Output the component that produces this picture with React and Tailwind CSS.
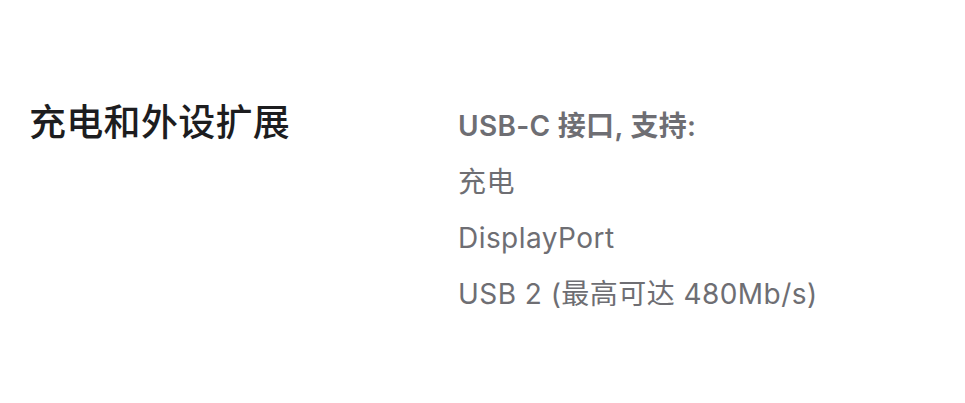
export default function App() {
  return (
    <div
      className="w-[965px] h-[403px] bg-white flex"
      style={{ fontFamily: 'Inter, "Noto Sans CJK SC", sans-serif' }}
    >
      <div className="w-[458px] pl-[29px] pt-[99px]">
        <h2 className="text-[37px] leading-[48px] font-medium text-[#1d1d1f] tracking-[0.3px]">
          充电和外设扩展
        </h2>
      </div>
      <div className="pt-[98px] flex flex-col text-[#6e6e73] text-[28px] leading-[56px] tracking-[0.45px]">
        <div className="font-semibold tracking-[0.3px]">USB-C 接口, 支持:</div>
        <div>充电</div>
        <div>DisplayPort</div>
        <div>USB 2 (最高可达 480Mb/s)</div>
      </div>
    </div>
  );
}
